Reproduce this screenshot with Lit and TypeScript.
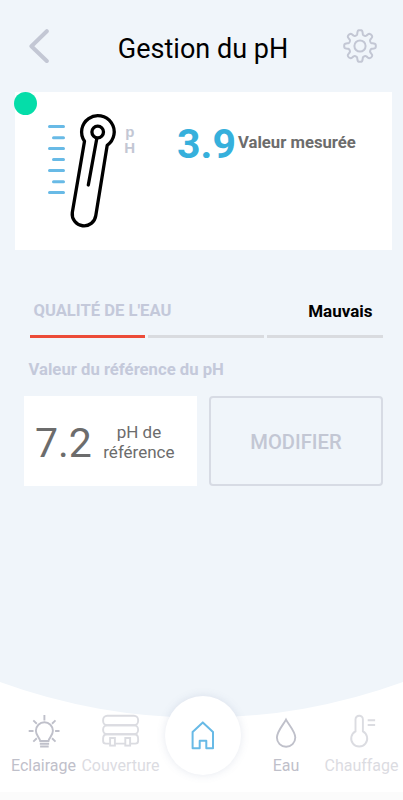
import { LitElement, html, css, svg } from "lit";
import { customElement, property } from "lit/decorators.js";

const bulb = svg`
  <path d="M39.7 741C39.3 737.4 35.4 736 35.4 730.8A8.5 8.5 0 0 1 52.4 730.8C52.4 736 48.4 737.4 48 741Z" />
  <path d="M39.3 743.8H48.6M39.6 746.4H48.2" stroke-width="2" />
  <path d="M43.9 715V720.4M28.2 731H33M54.6 731H59M32.8 720.4L36.3 723.7M55 720.4L51.5 723.7M32.8 741.6L36.3 738.2M55 741.6L51.5 738.2" />`;

const cover = svg`
  <rect x="102.6" y="715.8" width="35" height="9.4" rx="4.2" />
  <rect x="102.6" y="725.2" width="35" height="9" rx="4.2" />
  <path d="M109.4 743.6H105.4Q102.6 743.6 102.6 741V738.4Q102.6 734.2 106.8 734.2H133.4Q137.6 734.2 137.6 738.4V741Q137.6 743.6 134.8 743.6H129.8M124.6 743.6H114.4" />
  <rect x="109.6" y="738" width="4.8" height="7.6" />
  <rect x="124.8" y="738" width="4.8" height="7.6" />`;

const drop = svg`
  <path d="M286 719.6C283.4 724.6 276.9 731.4 276.9 737.6A9.2 9.2 0 0 0 295.3 737.6C295.3 731.4 288.6 724.6 286 719.6Z" />`;

const heat = svg`
  <path d="M356 731.4V719.4A3.7 3.7 0 0 1 363.4 719.4V731.4A8 8 0 1 1 356 731.4Z" />
  <path d="M368.2 720.3H375.6M368.2 725H375.6" />`;

const gear = (() => {
  const pts: string[] = [];
  for (let i = 0; i <= 240; i++) {
    const a = (i / 240) * Math.PI * 2;
    const c = Math.cos(8 * a);
    const r = 13.5 + 2.3 * Math.tanh(2.1 * c) / Math.tanh(2.1);
    pts.push(`${(17 + r * Math.sin(a)).toFixed(2)} ${(17 - r * Math.cos(a)).toFixed(2)}`);
  }
  return `M${pts.join("L")}Z`;
})();

@customElement("nav-item")
class NavItem extends LitElement {
  @property() label = "";
  @property() box = "";
  @property({ attribute: false }) icon: unknown;

  static styles = css`
    :host {
      display: flex;
      flex-direction: column;
      align-items: center;
      color: #bfc0ca;
      font-size: 16px;
      line-height: 20px;
      white-space: nowrap;
    }
    svg {
      width: 40px;
      height: 36px;
      margin-bottom: 7px;
      fill: none;
      stroke: currentColor;
      stroke-width: 1.9;
    }
  `;

  render() {
    return html`<svg viewBox=${this.box}>${this.icon}</svg><span>${this.label}</span>`;
  }
}

@customElement("app-root")
class AppRoot extends LitElement {
  static styles = css`
    :host {
      display: flex;
      flex-direction: column;
      position: relative;
      box-sizing: border-box;
      width: 403px;
      height: 800px;
      overflow: hidden;
      background: #f0f5fa;
      font-family: Roboto, sans-serif;
      color: #000;
    }
    header {
      display: grid;
      grid-template-columns: 50px 1fr 50px;
      align-items: center;
      height: 92px;
      padding: 0 18px;
      box-sizing: border-box;
      flex: none;
    }
    .icon {
      fill: none;
      stroke: #c3c7d4;
      display: block;
      width: 34px;
      height: 34px;
    }
    .gear {
      justify-self: end;
      margin-right: 8px;
    }
    .back {
      margin-left: 4px;
    }
    h1 {
      margin: 6px 0 0 3px;
      text-align: center;
      font-size: 27px;
      line-height: 32px;
      font-weight: 400;
      white-space: nowrap;
    }
    .card {
      position: relative;
      display: flex;
      flex: none;
      align-items: flex-start;
      margin: 0 11px 0 14.5px;
      height: 158px;
      background: #fff;
    }
    .dot {
      position: absolute;
      left: -0.5px;
      top: 0;
      width: 23px;
      height: 23px;
      border-radius: 50%;
      background: #05dda9;
    }
    .probe {
      width: 90px;
      height: 120px;
      margin: 18px 0 0 30.5px;
      flex: none;
      fill: none;
      stroke: #000;
      stroke-width: 3.3;
      stroke-linecap: round;
    }
    .ticks {
      stroke: #68bae6;
      stroke-width: 3;
    }
    .ph {
      fill: #c3c7d4;
      stroke: none;
      font: bold 15px "Liberation Sans", sans-serif;
    }
    .value {
      margin: 27.5px 0 0 42px;
      font-size: 41px;
      line-height: 48px;
      font-weight: 700;
      color: #36b0dc;
    }
    .caption {
      margin: 38.5px 0 0 2px;
      font-size: 16.7px;
      line-height: 24px;
      font-weight: 700;
      color: #6c6c6c;
      white-space: nowrap;
    }
    .quality {
      display: flex;
      justify-content: space-between;
      margin: 49.5px 30.5px 0 33.5px;
      font-size: 17px;
      line-height: 22px;
      font-weight: 700;
    }
    .quality .muted {
      font-size: 16.6px;
    }
    .muted {
      color: #c4c9da;
    }
    .bars {
      display: grid;
      grid-template-columns: repeat(3, 1fr);
      gap: 3px;
      margin: 13px 20px 0 29.5px;
    }
    .bar {
      height: 3.5px;
      background: #d9dbdf;
    }
    .bar.on {
      background: #ec4b38;
    }
    .ref {
      margin: 21px 0 0 28.5px;
      font-size: 16.7px;
      line-height: 22px;
      font-weight: 700;
    }
    .row {
      display: grid;
      grid-template-columns: 173px 174px;
      gap: 12px;
      margin: 15px 0 0 24px;
      height: 90px;
    }
    .tile {
      display: flex;
      align-items: center;
      background: #fff;
      color: #6c6c6c;
      padding-left: 11px;
    }
    .big {
      font-size: 41px;
      line-height: 48px;
      margin-top: 4px;
    }
    .small {
      margin: 1px 0 0 9.5px;
      width: 75px;
      text-align: center;
      font-size: 17px;
      line-height: 20px;
    }
    button {
      margin: 0;
      border: 2px solid #d7dbe4;
      border-radius: 4px;
      background: none;
      color: #c3c7d4;
      font: 500 20.2px Roboto, sans-serif;
      padding: 1px 0 0;
    }
    footer {
      position: relative;
      margin-top: auto;
      height: 118px;
      flex: none;
    }
    .bg {
      position: absolute;
      inset: 0;
      width: 403px;
      height: 118px;
    }
    nav {
      position: relative;
      display: grid;
      grid-template-columns: 87px 67px 98px 68px 83px;
      padding-top: 31px;
    }
    nav-item {
      justify-self: center;
    }
    .faint {
      opacity: 0.55;
    }
    .home {
      display: flex;
      align-items: center;
      justify-content: center;
      justify-self: center;
      width: 76px;
      height: 79px;
      margin-top: -17px;
      border-radius: 50%;
      background: #fff;
      box-shadow: 0 0 8px rgba(100, 120, 160, 0.17);
    }
    .home svg {
      width: 24px;
      height: 30px;
      fill: none;
      stroke: #68bae6;
      stroke-width: 2;
      stroke-linejoin: round;
    }
  `;

  render() {
    return html`
      <header>
        <svg class="icon back" viewBox="0 0 34 34" stroke-width="4" stroke-linecap="round" stroke-linejoin="round">
          <path d="M24.8 2.2L9.4 17.2L24.8 32" />
        </svg>
        <h1>Gestion du pH</h1>
        <svg class="icon gear" viewBox="0 0 34 34" stroke-width="2">
          <path d=${gear} />
          <circle cx="17" cy="17" r="5.6" />
        </svg>
      </header>

      <section class="card">
        <i class="dot"></i>
        <svg class="probe" viewBox="45 110 90 120">
          <path class="ticks" d="M49.5 126.4H63.5M53.5 137.7H63.5M49.5 148.4H63.5M53.5 159.6H63.5M49.5 170.6H63.5M53.5 181.7H63.5M49.5 192.4H63.5" />
          <path d="M84.5 141.2A16.3 16.3 0 1 1 107.2 145.3L95.8 215.5A11.8 11.8 0 0 1 72.3 212.5Z" stroke-linejoin="round" />
          <circle cx="97.7" cy="132" r="5.8" />
          <path d="M96.8 138.5L88.3 185" />
          <text class="ph" x="125.3" y="137.3">p</text>
          <text class="ph" x="124.3" y="153">H</text>
        </svg>
        <span class="value">3.9</span>
        <span class="caption">Valeur mesurée</span>
      </section>

      <div class="quality"><span class="muted">QUALITÉ DE L'EAU</span><span>Mauvais</span></div>
      <div class="bars">
        <i class="bar on"></i><i class="bar"></i><i class="bar"></i>
      </div>
      <div class="ref muted">Valeur du référence du pH</div>
      <div class="row">
        <div class="tile">
          <span class="big">7.2</span>
          <span class="small">pH de référence</span>
        </div>
        <button>MODIFIER</button>
      </div>

      <footer>
        <svg class="bg" viewBox="0 682 403 118">
          <path d="M0 682A588 588 0 0 0 403 682V800H0Z" fill="#fff" />
          <rect y="792" width="403" height="8" fill="#fbfbfb" />
        </svg>
        <nav>
          <nav-item label="Eclairage" box="23.5 713 40 36" .icon=${bulb}></nav-item>
          <nav-item class="faint" label="Couverture" box="100.5 713 40 36" .icon=${cover}></nav-item>
          <div class="home">
            <svg viewBox="191.5 720.3 24 30">
              <path d="M193.1 731.2L203.3 721.7L213.5 731.2V747.5H206.8V740H200.2V747.5H193.1Z" />
            </svg>
          </div>
          <nav-item label="Eau" box="266 713 40 36" .icon=${drop}></nav-item>
          <nav-item class="faint" label="Chauffage" box="341.5 713 40 36" .icon=${heat}></nav-item>
        </nav>
      </footer>
    `;
  }
}
